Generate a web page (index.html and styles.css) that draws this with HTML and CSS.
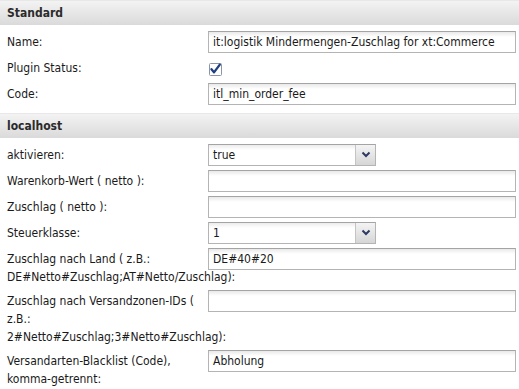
FILE: index.html
```html
<!DOCTYPE html>
<html>
<head>
<meta charset="utf-8">
<link rel="stylesheet" href="styles.css">
</head>
<body>
<div class="section">
  <div class="head">Standard</div>
  <div class="body">
    <div class="row">
      <div class="label">Name:</div>
      <div class="field"><div class="input">it:logistik Mindermengen-Zuschlag for xt:Commerce</div></div>
    </div>
    <div class="row">
      <div class="label">Plugin Status:</div>
      <div class="field">
        <svg class="check" width="13" height="13" viewBox="0 0 13 13">
          <rect x="0.5" y="0.5" width="12" height="12" rx="1" fill="#fff" stroke="#8c94a8"/>
          <path d="M2.5 6.2 L5 9.4 L10.8 1.6" fill="none" stroke="#1f3f80" stroke-width="2.3" stroke-linejoin="round" stroke-linecap="round"/>
        </svg>
      </div>
    </div>
    <div class="row">
      <div class="label">Code:</div>
      <div class="field"><div class="input">itl_min_order_fee</div></div>
    </div>
  </div>
</div>
<div class="section">
  <div class="head">localhost</div>
  <div class="body">
    <div class="row">
      <div class="label">aktivieren:</div>
      <div class="field"><div class="select"><span class="value">true</span><span class="arrow"><svg width="10" height="7" viewBox="0 0 10 7"><path d="M1.5 1.5 L5 5 L8.5 1.5" fill="none" stroke="#2c3a66" stroke-width="2"/></svg></span></div></div>
    </div>
    <div class="row">
      <div class="label">Warenkorb-Wert ( netto ):</div>
      <div class="field"><div class="input"></div></div>
    </div>
    <div class="row">
      <div class="label">Zuschlag ( netto ):</div>
      <div class="field"><div class="input"></div></div>
    </div>
    <div class="row">
      <div class="label">Steuerklasse:</div>
      <div class="field"><div class="select"><span class="value">1</span><span class="arrow"><svg width="10" height="7" viewBox="0 0 10 7"><path d="M1.5 1.5 L5 5 L8.5 1.5" fill="none" stroke="#2c3a66" stroke-width="2"/></svg></span></div></div>
    </div>
    <div class="row">
      <div class="label">Zuschlag nach Land ( z.B.: DE#Netto#Zuschlag;AT#Netto/Zuschlag):</div>
      <div class="field"><div class="input">DE#40#20</div></div>
    </div>
    <div class="row">
      <div class="label">Zuschlag nach Versandzonen-IDs ( z.B.: 2#Netto#Zuschlag;3#Netto#Zuschlag):</div>
      <div class="field"><div class="input"></div></div>
    </div>
    <div class="row">
      <div class="label">Versandarten-Blacklist (Code), komma-getrennt:</div>
      <div class="field"><div class="input">Abholung</div></div>
    </div>
  </div>
</div>
</body>
</html>
```

FILE: styles.css
```css
html, body {
  margin: 0;
  padding: 0;
  background: #fff;
}
body {
  font-family: "DejaVu Sans Condensed", "DejaVu Sans", sans-serif;
  font-size: 12px;
  color: #1a1a1a;
}
.head {
  height: 24px;
  line-height: 24px;
  padding-left: 7px;
  font-weight: bold;
  color: #2b2b2b;
  background: linear-gradient(#f3f3f3, #dadada);
  border-top: 1px solid #e8e8e8;
}
.body {
  padding: 4px 0 6px;
}
.row {
  display: flex;
  align-items: flex-start;
  padding: 2px 0;
}
.label {
  width: 201px;
  flex: none;
  box-sizing: border-box;
  padding: 2px 0 0 7px;
  line-height: 18px;
}
.field {
  flex: 1;
  margin-left: 7px;
  margin-right: 3px;
  min-height: 22px;
}
.input {
  box-sizing: border-box;
  height: 22px;
  border: 1px solid #b4b4b4;
  border-top-color: #a4a4a4;
  background: linear-gradient(#e9e9e9, #fff 5px);
  padding: 0 4px;
  line-height: 20px;
  white-space: nowrap;
  overflow: hidden;
}
.check {
  display: block;
  margin: 6px 0 0 1px;
}
.select {
  box-sizing: border-box;
  width: 168px;
  height: 22px;
  display: flex;
  border: 1px solid #b4b4b4;
  border-top-color: #a4a4a4;
  background: linear-gradient(#ececec, #fff 5px);
}
.select .value {
  flex: 1;
  padding: 0 4px;
  line-height: 20px;
}
.select .arrow {
  width: 19px;
  border-left: 1px solid #c4c4c4;
  background: linear-gradient(#f4f4f4, #d6d6d6);
  display: flex;
  align-items: center;
  justify-content: center;
}
.select .arrow svg {
  display: block;
  margin-top: -2px;
}
```
